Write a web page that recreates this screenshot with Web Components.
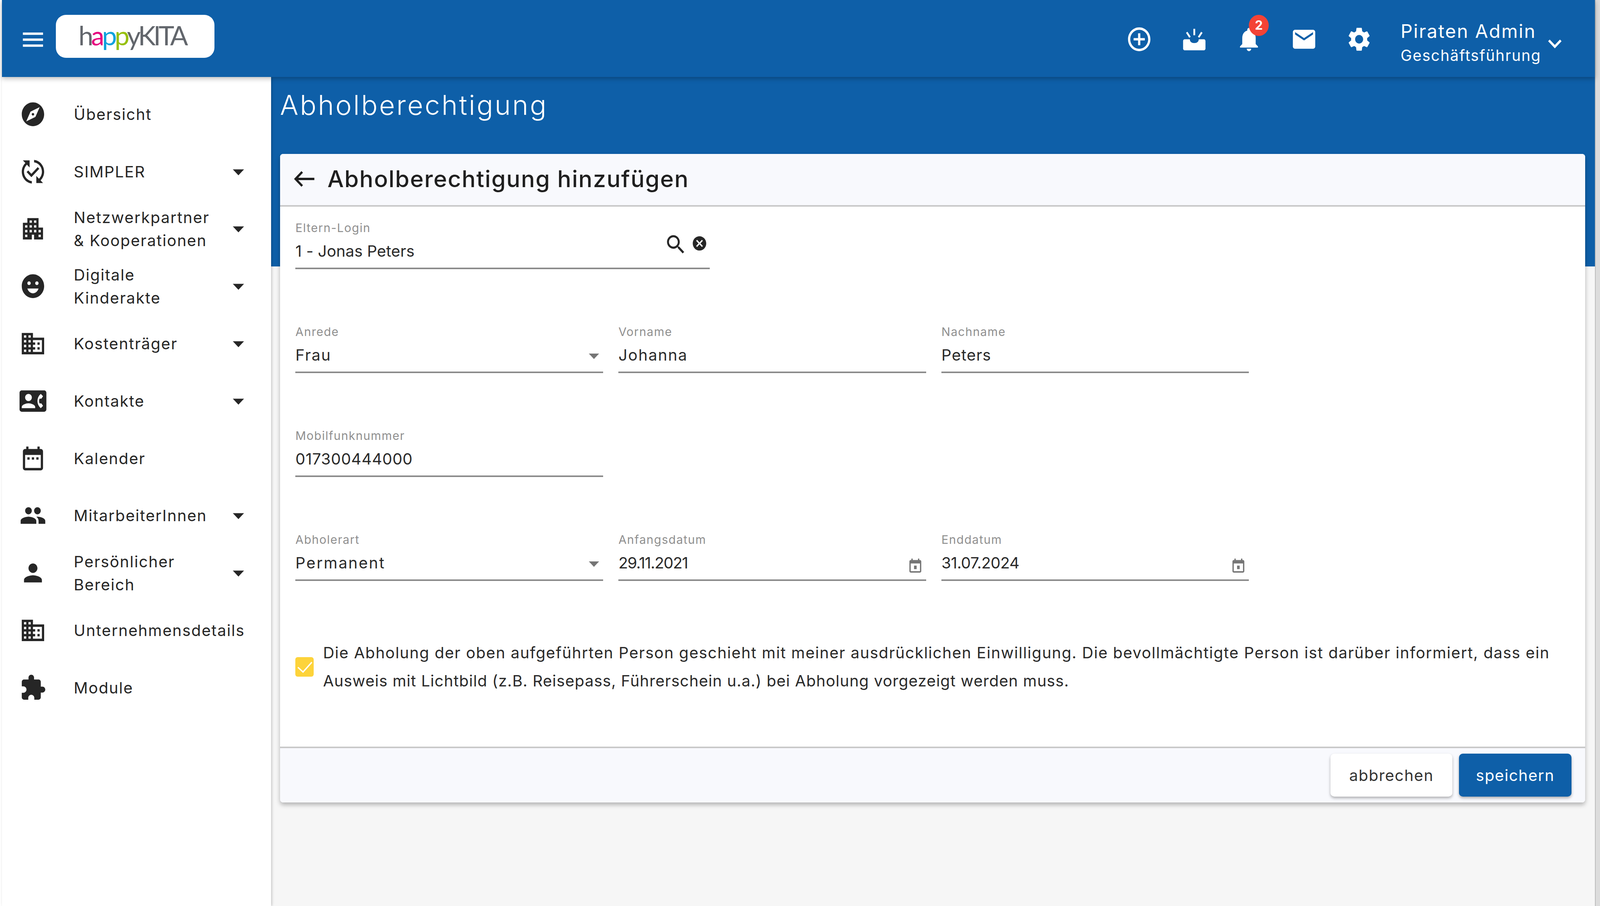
<!DOCTYPE html>
<html lang="de"><head><meta charset="utf-8"><title>Abholberechtigung</title>
<style>
html,body{margin:0;padding:0;background:#fff}
body{font-family:Inter,"Liberation Sans",sans-serif;color:#262626}
</style></head><body>
<hk-app>
  <hk-topbar slot="top"></hk-topbar>
  <hk-sidebar slot="side">
    <hk-nav icon="explore">Übersicht</hk-nav>
    <hk-nav icon="sync" caret>SIMPLER</hk-nav>
    <hk-nav icon="apartment" caret>Netzwerkpartner<br>&amp; Kooperationen</hk-nav>
    <hk-nav icon="face" caret>Digitale<br>Kinderakte</hk-nav>
    <hk-nav icon="business" caret>Kostenträger</hk-nav>
    <hk-nav icon="contact" caret>Kontakte</hk-nav>
    <hk-nav icon="calendar">Kalender</hk-nav>
    <hk-nav icon="people" caret>MitarbeiterInnen</hk-nav>
    <hk-nav icon="person" caret>Persönlicher<br>Bereich</hk-nav>
    <hk-nav icon="business">Unternehmensdetails</hk-nav>
    <hk-nav icon="extension">Module</hk-nav>
  </hk-sidebar>
  <hk-page slot="main" heading="Abholberechtigung">
    <hk-card heading="Abholberechtigung hinzufügen">
      <hk-row>
        <hk-field wide label="Eltern-Login" value="1 - Jonas Peters" ls=".1" trail="search"></hk-field>
      </hk-row>
      <hk-row>
        <hk-field label="Anrede" value="Frau" ls="2" trail="select"></hk-field>
        <hk-field label="Vorname" value="Johanna" ls="2.1"></hk-field>
        <hk-field label="Nachname" value="Peters" ls="1.1"></hk-field>
      </hk-row>
      <hk-row>
        <hk-field label="Mobilfunknummer" value="017300444000" ls=".7"></hk-field>
      </hk-row>
      <hk-row>
        <hk-field label="Abholerart" value="Permanent" ls="2.75" trail="select"></hk-field>
        <hk-field label="Anfangsdatum" value="29.11.2021" ls="-1.3" trail="date"></hk-field>
        <hk-field label="Enddatum" value="31.07.2024" ls="-.5" trail="date"></hk-field>
      </hk-row>
      <hk-check>Die Abholung der oben aufgeführten Person geschieht mit meiner ausdrücklichen Einwilligung. Die bevollmächtigte Person ist darüber informiert, dass ein<br><span style="letter-spacing:1.04px">Ausweis mit Lichtbild (z.B. Reisepass, Führerschein u.a.) bei Abholung vorgezeigt werden muss.</span></hk-check>
      <hk-button slot="actions" w="331">abbrechen</hk-button>
      <hk-button slot="actions" w="305" primary>speichern</hk-button>
    </hk-card>
  </hk-page>
</hk-app>
<script>
/* The layout is drawn on a 4349-wide plan; X() maps plan widths to the real window. */
const X=v=>(v*innerWidth/4349).toFixed(2)+'px';
const P={
menu:'M3 18h18v-2H3v2zm0-5h18v-2H3v2zm0-7v2h18V6H3z',
add:'M13 7h-2v4H7v2h4v4h2v-4h4v-2h-4V7zm-1-5C6.48 2 2 6.48 2 12s4.48 10 10 10 10-4.48 10-10S17.52 2 12 2zm0 18c-4.41 0-8-3.59-8-8s3.59-8 8-8 8 3.59 8 8-3.59 8-8 8z',
tray:'M3.5 12H8c0 2.2 1.8 3.2 4 3.2s4-1 4-3.2h4.5c.8 0 1.5.7 1.5 1.5v6.3c0 .8-.7 1.5-1.5 1.5h-17c-.8 0-1.5-.7-1.5-1.5v-6.3c0-.8.7-1.5 1.5-1.5zM11.2 3.2h1.6v5.4h-1.6zM4.6 6.6l1.3-.9 2.9 4.2-1.3.9zM19.4 6.6l-1.3-.9-2.9 4.2 1.3.9z',
bell:'M12 22c1.1 0 2-.9 2-2h-4c0 1.1.89 2 2 2zm6-6v-5c0-3.07-1.64-5.64-4.5-6.32V4c0-.83-.67-1.5-1.5-1.5s-1.5.67-1.5 1.5v.68C7.63 5.36 6 7.92 6 11v5l-2 2v1h16v-1l-2-2z',
mail:'M20 4H4c-1.1 0-1.99.9-1.99 2L2 18c0 1.1.9 2 2 2h16c1.1 0 2-.9 2-2V6c0-1.1-.9-2-2-2zm0 4l-8 5-8-5V6l8 5 8-5v2z',
gear:'M19.14 12.94c.04-.3.06-.61.06-.94 0-.32-.02-.64-.07-.94l2.03-1.58c.18-.14.23-.41.12-.61l-1.92-3.32c-.12-.22-.37-.29-.59-.22l-2.39.96c-.5-.38-1.03-.7-1.62-.94l-.36-2.54c-.04-.24-.24-.41-.48-.41h-3.84c-.24 0-.43.17-.47.41l-.36 2.54c-.59.24-1.13.57-1.62.94l-2.39-.96c-.22-.08-.47 0-.59.22L2.74 8.87c-.12.21-.08.47.12.61l2.03 1.58c-.05.3-.09.63-.09.94s.02.64.07.94l-2.03 1.58c-.18.14-.23.41-.12.61l1.92 3.32c.12.22.37.29.59.22l2.39-.96c.5.38 1.03.7 1.62.94l.36 2.54c.05.24.24.41.48.41h3.84c.24 0 .44-.17.47-.41l.36-2.54c.59-.24 1.13-.56 1.62-.94l2.39.96c.22.08.47 0 .59-.22l1.92-3.32c.12-.22.07-.47-.12-.61l-2.01-1.58zM12 15.6c-1.98 0-3.6-1.62-3.6-3.6s1.62-3.6 3.6-3.6 3.6 1.62 3.6 3.6-1.62 3.6-3.6 3.6z',
expand:'M16.59 8.59L12 13.17 7.41 8.59 6 10l6 6 6-6z',
explore:'M12 10.9c-.61 0-1.1.49-1.1 1.1s.49 1.1 1.1 1.1c.61 0 1.1-.49 1.1-1.1s-.49-1.1-1.1-1.1zM12 2C6.48 2 2 6.48 2 12s4.48 10 10 10 10-4.48 10-10S17.52 2 12 2zm2.19 12.19L6 18l3.81-8.19L18 6l-3.81 8.19z',
sync:'M17.66 9.53l-7.07 7.07-4.24-4.24 1.41-1.41 2.83 2.83 5.66-5.66 1.41 1.41zM4 12c0-2.33 1.02-4.42 2.62-5.88L9 8.5v-6H3l2.2 2.2C3.24 6.52 2 9.11 2 12c0 5.19 3.95 9.45 9 9.95v-2.02c-3.94-.49-7-3.86-7-7.93zm18 0c0-5.19-3.95-9.45-9-9.95v2.02c3.94.49 7 3.86 7 7.93 0 2.33-1.02 4.42-2.62 5.88L15 15.5v6h6l-2.2-2.2c1.96-1.82 3.2-4.41 3.2-7.3z',
apartment:'M17 11V3H7v4H3v14h8v-4h2v4h8V11h-4zM7 19H5v-2h2v2zm0-4H5v-2h2v2zm0-4H5V9h2v2zm4 4H9v-2h2v2zm0-4H9V9h2v2zm0-4H9V5h2v2zm4 8h-2v-2h2v2zm0-4h-2V9h2v2zm0-4h-2V5h2v2zm4 12h-2v-2h2v2zm0-4h-2v-2h2v2z',
face:'M11.99 2C6.47 2 2 6.48 2 12s4.47 10 9.99 10C17.52 22 22 17.52 22 12S17.52 2 11.99 2zM8.5 8c.83 0 1.5.67 1.5 1.5S9.33 11 8.5 11 7 10.33 7 9.5 7.67 8 8.5 8zM12 18c-2.28 0-4.22-1.66-5-4h10c-.78 2.34-2.72 4-5 4zm3.5-7c-.83 0-1.5-.67-1.5-1.5S14.67 8 15.5 8s1.5.67 1.5 1.5-.67 1.5-1.5 1.5z',
business:'M12 7V3H2v18h20V7H12zM6 19H4v-2h2v2zm0-4H4v-2h2v2zm0-4H4V9h2v2zm0-4H4V5h2v2zm4 12H8v-2h2v2zm0-4H8v-2h2v2zm0-4H8V9h2v2zm0-4H8V5h2v2zm10 12h-8v-2h2v-2h-2v-2h2v-2h-2V9h8v10zm-2-8h-2v2h2v-2zm0 4h-2v2h2v-2z',
contact:'M22 3H2C.9 3 0 3.9 0 5v14c0 1.1.9 2 2 2h20c1.1 0 1.99-.9 1.99-2L24 5c0-1.1-.9-2-2-2zM8 6c1.66 0 3 1.34 3 3s-1.34 3-3 3-3-1.34-3-3 1.34-3 3-3zm6 12H2v-1c0-2 4-3.1 6-3.1s6 1.1 6 3.1v1zm3.85-4h1.64L21 16l-1.99 1.99c-1.31-.98-2.28-2.38-2.73-3.99-.18-.64-.28-1.31-.28-2s.1-1.36.28-2c.45-1.62 1.42-3.01 2.73-3.99L21 8l-1.51 2h-1.64c-.22.63-.35 1.3-.35 2s.13 1.37.35 2z',
calendar:'M9 11H7v2h2v-2zm4 0h-2v2h2v-2zm4 0h-2v2h2v-2zm2-7h-1V2h-2v2H8V2H6v2H5c-1.11 0-1.99.9-1.99 2L3 20c0 1.1.89 2 2 2h14c1.1 0 2-.9 2-2V6c0-1.1-.9-2-2-2zm0 16H5V9h14v11z',
people:'M16 11c1.66 0 2.99-1.34 2.99-3S17.66 5 16 5c-1.66 0-3 1.34-3 3s1.34 3 3 3zm-8 0c1.66 0 2.99-1.34 2.99-3S9.66 5 8 5C6.34 5 5 6.34 5 8s1.34 3 3 3zm0 2c-2.33 0-7 1.17-7 3.5V19h14v-2.5c0-2.33-4.67-3.5-7-3.5zm8 0c-.29 0-.62.02-.97.05 1.16.84 1.97 1.97 1.97 3.45V19h6v-2.5c0-2.33-4.67-3.5-7-3.5z',
person:'M12 12c2.21 0 4-1.79 4-4s-1.79-4-4-4-4 1.79-4 4 1.79 4 4 4zm0 2c-2.67 0-8 1.34-8 4v2h16v-2c0-2.66-5.33-4-8-4z',
extension:'M20.5 11H19V7c0-1.1-.9-2-2-2h-4V3.5C13 2.12 11.88 1 10.5 1S8 2.12 8 3.5V5H4c-1.1 0-1.99.9-1.99 2v3.8H3.5c1.49 0 2.7 1.21 2.7 2.7s-1.21 2.7-2.7 2.7H2V20c0 1.1.9 2 2 2h3.8v-1.5c0-1.49 1.21-2.7 2.7-2.7 1.49 0 2.7 1.21 2.7 2.7V22H17c1.1 0 2-.9 2-2v-4h1.5c1.38 0 2.5-1.12 2.5-2.5S21.88 11 20.5 11z',
drop:'M7 10l5 5 5-5z',
search:'M15.5 14h-.79l-.28-.27C15.41 12.59 16 11.11 16 9.5 16 5.91 13.09 3 9.5 3S3 5.91 3 9.5 5.91 16 9.5 16c1.61 0 3.09-.59 4.23-1.57l.27.28v.79l5 4.99L20.49 19l-4.99-5zm-6 0C7.01 14 5 11.99 5 9.5S7.01 5 9.5 5 14 7.01 14 9.5 11.99 14 9.5 14z',
cancel:'M12 2C6.47 2 2 6.47 2 12s4.47 10 10 10 10-4.47 10-10S17.53 2 12 2zm5 13.59L15.59 17 12 13.41 8.41 17 7 15.59 10.59 12 7 8.41 8.41 7 12 10.59 15.59 7 17 8.41 13.41 12 17 15.59z',
event:'M14 11h-4v5h4zM16 1v2H8V1H6v2H5c-1.11 0-1.99.9-1.99 2L3 19c0 1.1.89 2 2 2h14c1.1 0 2-.9 2-2V5c0-1.1-.9-2-2-2h-1V1h-2zm3 18H5V8h14v11z'
};
const BLUE='#0e5fa8';
const def=(n,html)=>customElements.define(n,class extends HTMLElement{
  constructor(){super();this.attachShadow({mode:'open'});}
  connectedCallback(){this.shadowRoot.innerHTML=html(this);}
});
def('hk-icon',e=>{const s=+(e.getAttribute('size')||73);return `<style>:host{display:inline-flex;flex:none;width:${X(s)};height:${s}px;color:${e.getAttribute('color')||'inherit'}}svg{width:100%;height:100%;display:block;fill:currentColor}</style><svg viewBox="0 0 24 24" preserveAspectRatio="none" aria-hidden="true"><path d="${P[e.getAttribute('name')]}"/></svg>`});

def('hk-app',()=>`<style>
:host{display:grid;width:100vw;height:100vh;box-sizing:border-box;padding-left:${X(5)};grid-template-columns:${X(732)} ${X(3598)} 1fr;grid-template-rows:197px 1fr;background:#fff;overflow:hidden}
.top{grid-column:1/3;position:relative;z-index:3}
.side{position:relative;z-index:2;display:block}
.main{display:block;min-width:0}
.edge{grid-row:1/3;grid-column:3;background:#dcdcdc;border-left:${X(3)} solid #bdbdbd;box-sizing:border-box}
</style><div class="edge"></div><div class="top"><slot name="top"></slot></div><div class="side"><slot name="side"></slot></div><div class="main"><slot name="main"></slot></div>`);

def('hk-topbar',()=>`<style>
:host{display:flex;align-items:center;height:197px;box-sizing:border-box;background:${BLUE};color:#fff;padding:3px ${X(72)} 0 ${X(48.5)};box-shadow:0 4px 12px rgba(0,0,0,.28)}
.burger{margin-top:3px}
.logo{margin:-14px 0 0 ${X(25)};width:${X(431)};height:110px;background:#fff;border-radius:26px;display:flex;align-items:center;box-sizing:border-box;padding:0 0 6px ${X(62)};font:400 68px/1 Lato,"Open Sans",sans-serif;letter-spacing:-5.8px;color:#62666c;white-space:nowrap}
.a{color:#e6007e}.p1{color:#0ea2dc}.p2{color:#97c00e}
.right{margin-left:auto;display:flex;align-items:center}
.cell{width:${X(149.5)};height:73px;display:flex;justify-content:center;position:relative}
.badge{position:absolute;left:${X(74)};top:-26px;width:${X(54)};height:54px;border-radius:50%;background:#f44336;color:#fff;font:700 32px/54px Inter,sans-serif;text-align:center}
.who{margin-left:${X(38)};width:${X(383)};margin-top:21px;white-space:nowrap}
.n{font-size:48px;line-height:62px;letter-spacing:2.3px}
.r{font-size:39px;line-height:62px;letter-spacing:1.8px}
.chev{margin:22px 0 0 0}
</style>
<hk-icon class="burger" name="menu"></hk-icon>
<div class="logo"><span>h<span class="a">a</span><span class="p1">p</span><span class="p2">p</span>yKITA</span></div>
<div class="right">
<div class="cell"><hk-icon name="add"></hk-icon></div>
<div class="cell"><hk-icon name="tray"></hk-icon></div>
<div class="cell"><hk-icon name="bell"></hk-icon><span class="badge">2</span></div>
<div class="cell"><hk-icon name="mail"></hk-icon></div>
<div class="cell"><hk-icon name="gear"></hk-icon></div>
<div class="who"><div class="n">Piraten Admin</div><div class="r">Geschäftsführung</div></div>
<hk-icon class="chev" name="expand"></hk-icon>
</div>`);

def('hk-sidebar',()=>`<style>:host{display:block;height:100%;box-sizing:border-box;padding-top:22px;background:#fff;box-shadow:2px 0 6px rgba(0,0,0,.22)}</style><slot></slot>`);

def('hk-nav',e=>`<style>
:host{display:flex;align-items:center;height:146.8px;padding:0 ${X(52.5)} 0 ${X(48.5)};color:#262626}
.t{margin-left:${X(74)};font-size:40px;line-height:59px;letter-spacing:1.85px;white-space:nowrap;flex:1}
</style><hk-icon name="${e.getAttribute('icon')}"></hk-icon><div class="t"><slot></slot></div>${e.hasAttribute('caret')?'<hk-icon name="drop"></hk-icon>':''}`);

def('hk-page',e=>`<style>
:host{display:block;height:100%;box-sizing:border-box;padding:0 ${X(26)} 0 ${X(24)};background:linear-gradient(${BLUE} 485px,#f6f6f6 485px)}
h1{margin:0;height:197px;box-sizing:border-box;padding-top:30px;font-size:70px;line-height:84px;font-weight:300;color:#fff;letter-spacing:3.87px}
</style><h1>${e.getAttribute('heading')}</h1><slot></slot>`);

def('hk-card',e=>`<style>
:host{display:flex;flex-direction:column;height:1660px;background:#fff;border-radius:8px;box-shadow:0 6px 12px rgba(0,0,0,.28);overflow:hidden}
header{height:135px;box-sizing:border-box;background:#f8f9fd;border-bottom:4px solid #c9c9c9;display:flex;align-items:center;padding:0 0 4px ${X(38)}}
h2{margin:0 0 0 ${X(33)};font-size:59px;line-height:80px;font-weight:500;color:#1f1f1f;letter-spacing:1.81px}
svg{width:${X(58)};height:42px;flex:none;fill:none;stroke:#1f1f1f;stroke-width:6}
.body{flex:1;padding:34px 0 0 ${X(42)};box-sizing:border-box;display:flex;flex-direction:column;gap:140px}
footer{height:143px;box-sizing:border-box;background:#f8f9fd;border-top:4px solid #c9c9c9;display:flex;justify-content:flex-end;gap:${X(18.5)};padding:14px ${X(38)} 0 0}
</style><header><svg viewBox="0 0 58 42" preserveAspectRatio="none"><path d="M56 21H5M23 3L5 21l18 18"/></svg><h2>${e.getAttribute('heading')}</h2></header><div class="body"><slot></slot></div><footer><slot name="actions"></slot></footer>`);

def('hk-row',()=>`<style>:host{display:grid;grid-template-columns:${X(836)} ${X(836)} ${X(836)};gap:${X(42)};height:126px}</style><slot></slot>`);

def('hk-field',e=>{const tr=e.getAttribute('trail');let t='';
 if(tr==='search')t='<div class="tr s"><hk-icon name="search" size="64"></hk-icon><hk-icon class="c" name="cancel" size="44"></hk-icon></div>';
 if(tr==='select')t='<div class="tr sel"><hk-icon name="drop" size="67" color="#757575"></hk-icon></div>';
 if(tr==='date')t='<div class="tr d"><hk-icon name="event" size="43" color="#757575"></hk-icon></div>';
 const wide=e.hasAttribute('wide');
 return `<style>
:host{display:flex;flex-direction:column;height:126px;box-sizing:border-box;border-bottom:4px solid #8b8b8b;position:relative;${wide?`grid-column:1/span 2;width:${X(1126)};`:''}}
.l{height:50px;font-size:30px;line-height:40px;color:#8f8f8f;letter-spacing:1.5px;white-space:nowrap}
.v{font-size:40px;line-height:60px;color:#2a2a2a;letter-spacing:${e.getAttribute('ls')||1}px;white-space:nowrap}
.tr{position:absolute;display:flex;align-items:center}
.s{right:${X(5.5)};top:31px}
.c{margin:-6px 0 0 ${X(10.5)}}
.sel{right:${X(-8.5)};top:48px}
.d{right:${X(7.5)};top:67px}
</style><div class="l">${e.getAttribute('label')}</div><div class="v">${e.getAttribute('value')}</div>${t}`});

def('hk-check',()=>`<style>
:host{display:flex;align-items:center;margin-top:8px;height:144px}
.box{width:${X(50)};height:50px;flex:none;background:#fdd33a;border-radius:6px}
svg{display:block;width:100%;height:100%;fill:none;stroke:#fff;stroke-width:3.5}
.t{margin-left:${X(25)};font-size:40px;line-height:72px;color:#2a2a2a;letter-spacing:1.55px;white-space:nowrap}
</style><div class="box"><svg viewBox="0 0 50 50" preserveAspectRatio="none"><path d="M7 26l14 12 24-25"/></svg></div><div class="t"><slot></slot></div>`);

def('hk-button',e=>{const p=e.hasAttribute('primary');return `<style>
:host{display:flex;align-items:center;justify-content:center;width:${X(+e.getAttribute('w'))};height:110px;border-radius:10px;font-size:40px;letter-spacing:1.5px;background:${p?BLUE:'#fff'};color:${p?'#fff':'#333'};box-shadow:0 4px 7px rgba(0,0,0,.3)}
</style><slot></slot>`});
</script>
</body></html>
